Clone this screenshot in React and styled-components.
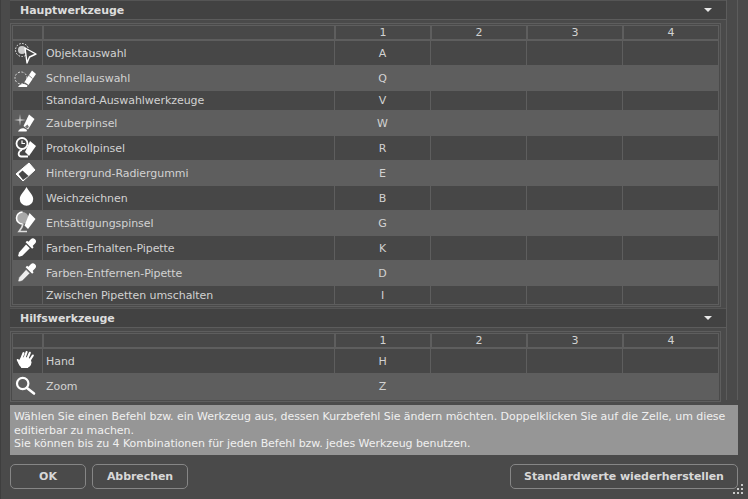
import React from "react";
import styled, { createGlobalStyle } from "styled-components";

const Global = createGlobalStyle`
  html, body { margin: 0; padding: 0; background: #4a4a4a; }
  * { box-sizing: border-box; }
`;

const Window = styled.div`
  position: relative;
  width: 748px;
  height: 499px;
  overflow: hidden;
  background: #4a4a4a;
  padding-left: 9px;
  font-family: "DejaVu Sans", "Noto Sans", sans-serif;
  font-size: 11px;
  letter-spacing: -0.06px;
  color: #d2d2d2;
  border-left: 1px solid #3e3e3e;
  display: flex;
  flex-direction: column;
`;

const ScrollArea = styled.div`
  display: flex;
  height: 400px;
`;

const Content = styled.div`
  width: 716px;
  flex: none;
`;

const Track = styled.div`
  width: 12px;
  border-left: 1px solid #5c5c5c;
  border-right: 1px solid #5c5c5c;
`;

const SectionHeader = styled.div`
  height: 20px;
  display: flex;
  align-items: center;
  justify-content: space-between;
  padding: 0 14px 0 10px;
  background: #424242;
  border-top: 1px solid #555;
  border-bottom: 1px solid #5c5c5c;
  font-weight: 700;
  color: #dcdcdc;
`;

const Chevron = styled.span`
  width: 0;
  height: 0;
  border-left: 4.5px solid transparent;
  border-right: 4.5px solid transparent;
  border-top: 4px solid #e8e8e8;
`;

const Frame = styled.div`
  width: 711px;
  margin: 3px 0 1px 0;
  border: 1px solid #5e5e5e;
  padding: 1px;
`;

const Table = styled.div`
  border: 1px solid #5e5e5e;
  background: #474747;
`;

const columns = "30px 292px 96px 96px 96px 95px";

const HeadRow = styled.div`
  display: grid;
  grid-template-columns: ${columns};
  height: 15px;
  background: #5e5e5e;
  padding-bottom: 2px;
`;

const HeadCell = styled.div`
  background: #484848;
  margin: 0 1px;
  text-align: center;
  line-height: 13px;
  &:first-child { margin-left: 0; }
  &:last-child { margin-right: 0; }
`;

const Row = styled.div`
  display: grid;
  grid-template-columns: ${columns};
  height: ${(p) => p.$h}px;
  background: ${(p) => (p.$alt ? "#5e5e5e" : "#474747")};
`;

const IconCell = styled.div`
  display: flex;
  align-items: center;
  justify-content: center;
  border-right: 1px solid #5e5e5e;
`;

const NameCell = styled.div`
  display: flex;
  align-items: center;
  padding-left: 3px;
  border-right: 1px solid #5e5e5e;
  white-space: nowrap;
`;

const KeyCell = styled.div`
  display: flex;
  align-items: center;
  justify-content: center;
  border-right: 1px solid #5e5e5e;
  &:last-child { border-right: none; }
`;

const Info = styled.div`
  margin-top: 5px;
  width: 728px;
  height: 50px;
  background: #969696;
  color: #f0f0f0;
  padding: 5px 4px;
  line-height: 13.6px;
`;

const Footer = styled.div`
  display: flex;
  margin-top: 9px;
  width: 728px;
  gap: 6px;
`;

const Button = styled.button`
  height: 25px;
  width: ${(p) => p.$w}px;
  margin-left: ${(p) => (p.$push ? "auto" : "0")};
  background: transparent;
  border: 1px solid #868686;
  border-radius: 5px;
  color: #d8d8d8;
  font-family: "DejaVu Sans", sans-serif;
  font-weight: 700;
  font-size: 11px;
  letter-spacing: -0.06px;
  padding: 0;
`;

const Grip = styled.svg`
  position: absolute;
  right: 4px;
  bottom: 4px;
`;

const Sv = styled.svg`
  display: block;
  flex: none;
`;

const Icon = ({ children }) => (
  <Sv width="28" height="24" viewBox="0 0 28 24">{children}</Sv>
);

const icons = {
  object: (
    <Icon>
      <circle cx="8" cy="9" r="6.5" fill="none" stroke="#eee" strokeWidth="1" strokeDasharray="1.5 1.5" />
      <circle cx="8" cy="9" r="4" fill="#ccc" />
      <path d="M11 7L22 13L15.5 16L13 22Z" fill="#474747" stroke="#fff" strokeWidth="1.4" strokeLinejoin="round" />
    </Icon>
  ),
  quick: (
    <Icon>
      <circle cx="7" cy="12" r="6" fill="none" stroke="#ddd" strokeWidth="1" strokeDasharray="2 1.5" />
      <path d="M18 4.5L22 8L14.5 19L10.5 16Z" fill="#fff" />
      <path d="M15 9.5L18.5 12.5" stroke="#5e5e5e" strokeWidth="0.7" />
      <path d="M4 21C6 18 9 17 13.5 19.5L13 21Z" fill="#fff" />
    </Icon>
  ),
  magic: (
    <Icon>
      <path d="M6 3L6.7 8.3L12 9L6.7 9.7L6 15L5.3 9.7L0 9L5.3 8.3Z" fill="#cfcfcf" />
      <path d="M15 3.5L20.5 8L14 18.5L9.5 15Z" fill="#fff" />
      <path d="M4 20.5C6 17.5 9 16 13 19L12.5 20.5Z" fill="#fff" />
      <path d="M11 15.5L13.5 13.5L15 16L13 17.5Z" fill="#777" />
    </Icon>
  ),
  history: (
    <Icon>
      <circle cx="8" cy="7.5" r="5.5" fill="none" stroke="#fff" strokeWidth="1.8" />
      <path d="M8 4.5V7.5H11" fill="none" stroke="#fff" strokeWidth="1.2" />
      <path d="M16 5L22 10L15 20L11 16Z" fill="#fff" />
      <path d="M8 14C4 15 3.5 20 7 20.5H14" fill="none" stroke="#fff" strokeWidth="1.8" />
    </Icon>
  ),
  eraser: (
    <Icon>
      <path d="M15 2L21 9L9 20L2 13Z" fill="#fff" stroke="#fff" strokeWidth="1" strokeLinejoin="round" />
      <path d="M4.5 13L8.5 9.5L14.5 15L9 19Z" fill="#474747" />
    </Icon>
  ),
  drop: (
    <Icon>
      <path d="M12.5 1C14 4.5 19.2 8.5 19.2 13A6.7 6.7 0 0 1 5.8 13C5.8 8.5 11 4.5 12.5 1Z" fill="#fff" />
    </Icon>
  ),
  desat: (
    <Icon>
      <circle cx="8.5" cy="7" r="6" fill="#a8a8a8" />
      <path d="M8.5 1A6 6 0 0 0 8.5 13" fill="none" stroke="#fff" strokeWidth="1.6" />
      <path d="M15.5 2L21.5 8L14 18L10.5 14.5Z" fill="#fff" />
      <path d="M9 13C8.5 16 7 18 5 20.5H13" fill="none" stroke="#ddd" strokeWidth="1.6" />
    </Icon>
  ),
  pipette: (
    <Icon>
      <g transform="translate(0.8,1) scale(.94)">
        <path d="M17 2.5A3 3 0 0 1 21.5 7L19 9.5L20 11L18.5 12.5L11.5 5.5L13 4L14.5 5Z" fill="#fff" />
        <path d="M12 8L16 12L8 20L4.5 21L3.5 20L4.5 16.5Z" fill="#fff" />
      </g>
    </Icon>
  ),
  pipette2: (
    <Icon>
      <g transform="translate(0.8,1) scale(.94)">
        <path d="M17 2.5A3 3 0 0 1 21.5 7L19 9.5L20 11L18.5 12.5L11.5 5.5L13 4L14.5 5Z" fill="#fff" />
        <path d="M12 8L16 12L8 20L4.5 21L3.5 20L4.5 16.5Z" fill="#eee" stroke="#5e5e5e" strokeWidth="0.5" />
      </g>
    </Icon>
  ),
  hand: (
    <Icon>
      <ellipse cx="11" cy="13.5" rx="6.5" ry="5.5" fill="#fff" />
      <path d="M7 19L14 19L15 15L8 14Z" fill="#fff" />
      <path d="M6.8 11L9.5 4.2M10 10.5L12.6 3M13 10.5L15.8 3.8M15.6 11.5L18.8 6.5M6 15L3.8 11" stroke="#fff" strokeWidth="2.1" strokeLinecap="round" fill="none" />
    </Icon>
  ),
  zoom: (
    <Icon>
      <circle cx="8.7" cy="9.5" r="5.7" fill="none" stroke="#fff" strokeWidth="2.2" />
      <path d="M13 14L20 19.5" stroke="#fff" strokeWidth="2.6" strokeLinecap="round" />
    </Icon>
  ),
};

const HeaderRow = () => (
  <HeadRow>
    <HeadCell />
    <HeadCell />
    {[1, 2, 3, 4].map((n) => (
      <HeadCell key={n}>{n}</HeadCell>
    ))}
  </HeadRow>
);

const ToolRow = ({ icon, name, k, h, alt }) => (
  <Row $h={h} $alt={alt}>
    <IconCell>{icon ? icons[icon] : null}</IconCell>
    <NameCell>{name}</NameCell>
    <KeyCell>{k}</KeyCell>
    <KeyCell />
    <KeyCell />
    <KeyCell />
  </Row>
);

const main = [
  ["object", "Objektauswahl", "A", 24],
  ["quick", "Schnellauswahl", "Q", 26],
  [null, "Standard-Auswahlwerkzeuge", "V", 19],
  ["magic", "Zauberpinsel", "W", 26],
  ["history", "Protokollpinsel", "R", 24],
  ["eraser", "Hintergrund-Radiergummi", "E", 26],
  ["drop", "Weichzeichnen", "B", 24],
  ["desat", "Entsättigungspinsel", "G", 26],
  ["pipette", "Farben-Erhalten-Pipette", "K", 24],
  ["pipette2", "Farben-Entfernen-Pipette", "D", 26],
  [null, "Zwischen Pipetten umschalten", "I", 18],
];

const aux = [
  ["hand", "Hand", "H", 24],
  ["zoom", "Zoom", "Z", 26],
];

const Section = ({ title, rows }) => (
  <>
    <SectionHeader>
      {title}
      <Chevron />
    </SectionHeader>
    <Frame>
      <Table>
        <HeaderRow />
        {rows.map(([icon, name, k, h], i) => (
          <ToolRow key={name} icon={icon} name={name} k={k} h={h} alt={i % 2 === 1} />
        ))}
      </Table>
    </Frame>
  </>
);

export default function App() {
  return (
    <Window>
      <Global />
      <ScrollArea>
        <Content>
          <Section title="Hauptwerkzeuge" rows={main} />
          <Section title="Hilfswerkzeuge" rows={aux} />
        </Content>
        <Track />
      </ScrollArea>
      <Info>
        Wählen Sie einen Befehl bzw. ein Werkzeug aus, dessen Kurzbefehl Sie ändern möchten. Doppelklicken Sie auf die Zelle, um diese editierbar zu machen.
        <br />
        Sie können bis zu 4 Kombinationen für jeden Befehl bzw. jedes Werkzeug benutzen.
      </Info>
      <Footer>
        <Button $w={76}>OK</Button>
        <Button $w={96}>Abbrechen</Button>
        <Button $w={228} $push>Standardwerte wiederherstellen</Button>
      </Footer>
      <Grip width="12" height="12" viewBox="0 0 12 12">
        <path d="M9 1h2v2H9zM5 5h2v2H5zM9 5h2v2H9zM1 9h2v2H1zM5 9h2v2H5zM9 9h2v2H9z" fill="#c8c8c8" />
      </Grip>
    </Window>
  );
}
